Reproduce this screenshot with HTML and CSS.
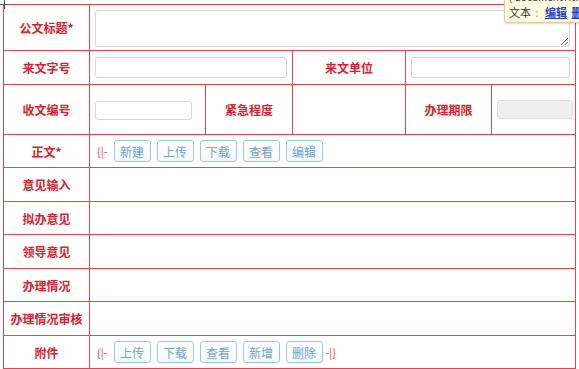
FILE: index.html
```html
<!DOCTYPE html>
<html lang="zh-CN">
<head>
    <meta charset="UTF-8">
    <title>公文表单</title>
    <link rel="stylesheet" href="styles.css">
</head>
<body>
    <div class="cursor"></div>
    <table class="form-table">
        <colgroup>
            <col style="width:86px">
            <col style="width:116px">
            <col style="width:87px">
            <col style="width:113px">
            <col style="width:86px">
            <col style="width:84px">
        </colgroup>
        <tr class="row-title">
            <td class="label">公文标题*</td>
            <td colspan="5"><textarea class="field area"></textarea></td>
        </tr>
        <tr class="row-mid">
            <td class="label">来文字号</td>
            <td colspan="2"><input class="field wide" type="text"></td>
            <td class="label">来文单位</td>
            <td colspan="2"><input class="field wide" type="text"></td>
        </tr>
        <tr class="row-tall">
            <td class="label">收文编号</td>
            <td><input class="field short" type="text"></td>
            <td class="label">紧急程度</td>
            <td></td>
            <td class="label">办理期限</td>
            <td><input class="field locked" type="text" disabled></td>
        </tr>
        <tr>
            <td class="label">正文*</td>
            <td colspan="5">
                <div class="tools">
                    <span class="mark">{|-</span>
                    <button class="btn">新建</button>
                    <button class="btn">上传</button>
                    <button class="btn">下载</button>
                    <button class="btn">查看</button>
                    <button class="btn">编辑</button>
                </div>
            </td>
        </tr>
        <tr class="row-big"><td class="label">意见输入</td><td colspan="5"></td></tr>
        <tr><td class="label">拟办意见</td><td colspan="5"></td></tr>
        <tr class="row-big"><td class="label">领导意见</td><td colspan="5"></td></tr>
        <tr><td class="label">办理情况</td><td colspan="5"></td></tr>
        <tr class="row-big"><td class="label">办理情况审核</td><td colspan="5"></td></tr>
        <tr>
            <td class="label">附件</td>
            <td colspan="5">
                <div class="tools">
                    <span class="mark">{|-</span>
                    <button class="btn">上传</button>
                    <button class="btn">下载</button>
                    <button class="btn">查看</button>
                    <button class="btn">新增</button>
                    <button class="btn">删除</button>
                    <span class="mark end">-|}</span>
                </div>
            </td>
        </tr>
    </table>

    <div class="tip">
        <div class="tip-head">[ documentTitle ]</div>
        <div class="tip-body">文本 <span class="sep">:</span> <a href="#">编辑</a> <a href="#">删除</a></div>
    </div>
</body>
</html>
```

FILE: styles.css
```css
body {
    margin: 0;
    padding: 4px 0 0 3px;
    font-family: "Noto Sans CJK SC", "Noto Sans", sans-serif;
    font-size: 12px;
    background: #fff;
    overflow: hidden;
}
.cursor {
    position: absolute;
    left: 0;
    top: 0;
    width: 9px;
    height: 9px;
}
.cursor::before,
.cursor::after {
    content: "";
    position: absolute;
    background: #555;
}
.cursor::before { left: 4px; top: 0; width: 1px; height: 9px; }
.cursor::after { left: 0; top: 4px; width: 9px; height: 1px; }

.form-table {
    border-collapse: collapse;
    table-layout: fixed;
    width: 573px;
}
.form-table td {
    border: 1px solid #e4454f;
    height: 32px;
    padding: 0 5px;
    vertical-align: middle;
}
.form-table .row-title td { height: 45px; }
.form-table .row-mid td { height: 33px; }
.form-table .row-tall td { height: 49px; }
.form-table .row-big td { height: 33px; }
.form-table td.label {
    color: #d81e2c;
    font-weight: bold;
    text-align: center;
    padding: 0;
    white-space: nowrap;
}

.field {
    box-sizing: border-box;
    border: 1px solid #d6d6d6;
    border-radius: 3px;
    background: #fff;
    font: inherit;
    display: block;
}
.area {
    width: 100%;
    height: 37px;
    resize: both;
    margin: 1px 0 0;
}
.wide { width: 100%; height: 21px; }
.short { width: 97px; height: 19px; margin-top: 1px; }
.locked { width: 76px; height: 19px; background: #efefef; border-color: #ddd; margin-top: -1px; }

.tools {
    display: flex;
    align-items: center;
    gap: 6px;
    padding-left: 2px;
}
.mark {
    color: #e4454f;
    font-size: 11px;
}
.mark.end { margin-left: -3px; }
.btn {
    width: 37px;
    height: 22px;
    padding: 0;
    border: 1px solid #9cc6e6;
    border-radius: 3px;
    background: linear-gradient(#fff, #f3f8fc);
    color: #6fa3cf;
    font: inherit;
    font-size: 12px;
}

.tip {
    position: absolute;
    left: 504px;
    top: -13px;
    width: 90px;
    padding: 2px 4px 3px;
    background: #fffbdf;
    border: 1px solid #e0cf94;
    border-radius: 3px;
    box-shadow: 0 1px 2px rgba(0, 0, 0, 0.15);
    font-size: 11px;
    color: #333;
    line-height: 13px;
}
.tip-head { color: #333; font-size: 10px; }
.tip-body { margin-top: 3px; }
.tip .sep { color: #999; margin: 0 2px; }
.tip a { color: #1a3ccf; font-weight: bold; margin-left: 2px; }
```
